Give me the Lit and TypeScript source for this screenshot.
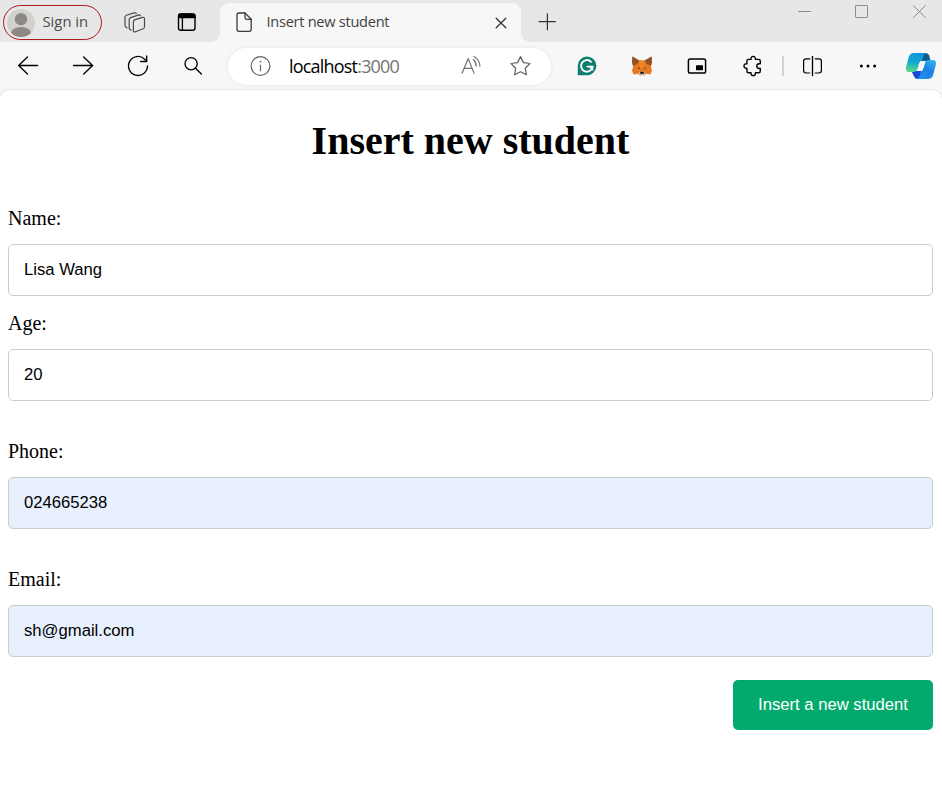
import { LitElement, html, css, svg } from "lit";
import { customElement, property } from "lit/decorators.js";

interface Glyph {
  box: string;
  w: number;
  h: number;
  art: unknown;
}

const glyphs: Record<string, Glyph> = {
  avatar: {
    box: "0 0 28 28", w: 28, h: 28,
    art: svg`<clipPath id="c"><circle cx="14" cy="14" r="14"/></clipPath>
      <g clip-path="url(#c)" stroke="none"><rect width="28" height="28" fill="#d3d1ce"/>
      <circle cx="14" cy="10.2" r="6.2" fill="#8b8885"/><ellipse cx="14" cy="25" rx="10.4" ry="7" fill="#8b8885"/></g>`,
  },
  stack: {
    box: "123 11 24 24", w: 24, h: 24,
    art: svg`<g stroke="#4a4a4a" stroke-width="1.2">
      <path d="M135.2 19.6L142.6 17.4Q144.5 17 144.5 19V26.8Q144.5 28.3 143.2 28.8L135.5 31.8Q133.4 32.5 133.4 30.3V22Q133.4 20.2 135.2 19.6Z"/>
      <path d="M131.2 30.2Q129.2 29.8 129.2 28V19.6Q129.2 18.2 130.6 17.6L138.2 15.1Q139.8 14.6 140.5 15.8"/>
      <path d="M127 27.8Q125 27.4 125 25.6V17.2Q125 15.8 126.4 15.2L134 12.9Q135.6 12.5 136.3 13.5"/></g>`,
  },
  tabs: {
    box: "175 11 24 24", w: 24, h: 24,
    art: svg`<rect x="178.5" y="14" width="16.5" height="16.3" rx="2.2" stroke-width="1.4"/>
      <path d="M178 18.3V15.6Q178 13.4 180.2 13.4H193.3Q195.6 13.4 195.6 15.6V18.3Z" fill="#000" stroke="none"/><path d="M182.4 18V30"/>`,
  },
  doc: {
    box: "234 10 20 24", w: 20, h: 24,
    art: svg`<g stroke="#3b3b3b" stroke-width="1.3"><path d="M239 13H245L251.2 19.3V29.2Q251.2 31.3 249.2 31.3H239Q237 31.3 237 29.2V15Q237 13 239 13Z"/>
      <path d="M245 13V17.5Q245 19.3 246.8 19.3H251.2"/></g>`,
  },
  close: { box: "0 0 12 12", w: 12, h: 12, art: svg`<path d="M1.2 1.2L10.8 10.8M10.8 1.2L1.2 10.8" stroke="#3b3b3b" stroke-width="1.4"/>` },
  plus: { box: "0 0 18 18", w: 18, h: 18, art: svg`<path d="M1 8.6H17.4M9.4 .8V16.8" stroke="#333" stroke-width="1.2"/>` },
  min: { box: "0 0 14 14", w: 14, h: 14, art: svg`<path d="M.5 6.5H12.5" stroke="#8d8d8d" stroke-width="1"/>` },
  max: { box: "0 0 14 14", w: 14, h: 14, art: svg`<rect x=".5" y=".5" width="12" height="12" rx=".6" stroke="#8d8d8d" stroke-width="1"/>` },
  quit: { box: "0 0 14 14", w: 14, h: 14, art: svg`<path d="M.4 .6L12.4 12.6M12.4 .6L.4 12.6" stroke="#8d8d8d" stroke-width="1"/>` },
  back: { box: "16 54 24 24", w: 24, h: 24, art: svg`<path d="M37.6 65.5H18.6M27.5 57L18.6 65.5L27.5 74"/>` },
  forward: { box: "71 54 24 24", w: 24, h: 24, art: svg`<path d="M73.6 65.5H92.6M83.7 57L92.6 65.5L83.7 74"/>` },
  reload: { box: "126 54 24 24", w: 24, h: 24, art: svg`<path d="M147.5 66A9.5 9.5 0 1 1 144.4 58.9L146.7 61.3M146.7 56V61.5H140.6"/>` },
  search: { box: "181 54 24 24", w: 24, h: 24, art: svg`<circle cx="191.1" cy="63.7" r="6.1"/><path d="M195.5 68.2L201.4 74"/>` },
  info: {
    box: "248 54 24 24", w: 24, h: 24,
    art: svg`<g stroke="#666" stroke-width="1.2"><circle cx="260.5" cy="66" r="9.4"/><path d="M260.5 65V70.8"/></g><circle cx="260.5" cy="61.7" r=".9" fill="#666" stroke="none"/>`,
  },
  read: {
    box: "460 54 24 24", w: 24, h: 24,
    art: svg`<g stroke="#707070" stroke-width="1.2"><path d="M462.2 73.1L468.2 58.6L474 73.1M464.3 68.3H472"/>
      <path d="M473.2 59.6Q476.2 61.8 476.2 66M474 56.4Q479.9 60 479.9 66.2"/></g>`,
  },
  star: {
    box: "508 54 25 24", w: 25, h: 24,
    art: svg`<path d="M520.5 56.6L523.5 62.6L530 63.5L525.3 68.2L526.4 74.8L520.5 71.7L514.6 74.8L515.7 68.2L511 63.5L517.5 62.6Z" stroke="#666" stroke-width="1.25"/>`,
  },
  grammar: {
    box: "576 55 22 22", w: 22, h: 22,
    art: svg`<path d="M587 56.4A9.3 9.3 0 1 1 587 75.2H577.8V65.8A9.3 9.3 0 0 1 587 56.4Z" fill="#0c7f6e" stroke="none"/>
      <path d="M591 61.8A5.8 5.8 0 1 0 592.6 66.6H587.4" stroke="#fff" stroke-width="1.9"/><path d="M590.4 68.2L592.7 66.6V70" stroke="#fff" stroke-width="1.2"/>`,
  },
  fox: {
    box: "631 55 22 22", w: 22, h: 22,
    art: svg`<g stroke="none"><path d="M632.4 56.6L639.3 60.4H644.7L651.6 56.6L652 62L650.9 66.8L652 70.8L650.4 74.6L646.4 73.8L644.3 75.2H639.7L637.6 73.8L633.6 74.6L632 70.8L633.1 66.8L632 62Z" fill="#e8781e"/>
      <path d="M632.4 56.6L639.3 60.6L637.2 64.2L633 65.6L632 62ZM651.6 56.6L644.7 60.6L646.8 64.2L651 65.6L652 62Z" fill="#91502a"/>
      <path d="M639.3 60.4H644.7L644 68H640Z" fill="#ee8524"/>
      <path d="M638 67.2L640 68.1L639.8 68.9L638.2 68.5ZM646 67.2L644 68.1L644.2 68.9L645.8 68.5Z" fill="#5a3b22"/>
      <path d="M639.8 71.6H644.2L645.4 73.4L644.2 75.2H639.8L638.6 73.4Z" fill="#cdb9a8"/><path d="M640.3 71.8H643.7L644 73.8H640Z" fill="#16181d"/></g>`,
  },
  pip: { box: "685 54 24 24", w: 24, h: 24, art: svg`<rect x="688.4" y="59" width="17.2" height="14" rx="1.8" stroke-width="1.5"/><rect x="696" y="65.3" width="7" height="4.9" rx=".6" fill="#000" stroke="none"/>` },
  puzzle: {
    box: "740 54 24 24", w: 24, h: 24,
    art: svg`<path d="M748.6 59.4H751C750.4 55.4 756 55.4 755.4 59.4H758.6Q760.3 59.4 760.3 61.1V63.7H759.2C756 63.7 756 68.5 759.2 68.5H760.3V71Q760.3 72.8 758.6 72.8H755.4C756 76.6 750.4 76.6 751 72.8H748.6Q746.9 72.8 746.9 71V68.3C743 68.9 743 63.2 746.9 63.8V61.1Q746.9 59.4 748.6 59.4Z" stroke-width="1.4"/>`,
  },
  split: {
    box: "800 54 24 24", w: 24, h: 24,
    art: svg`<path d="M809.8 58.8H806Q803.6 58.8 803.6 61.2V70.6Q803.6 73 806 73H809.8M815.2 58.8H819Q821.4 58.8 821.4 61.2V70.6Q821.4 73 819 73H815.2" stroke-width="1.2"/><path d="M812.5 56.5V75.5"/>`,
  },
  dots: { box: "856 54 24 24", w: 24, h: 24, art: svg`<g fill="#000" stroke="none"><circle cx="861.4" cy="66" r="1.5"/><circle cx="868" cy="66" r="1.5"/><circle cx="874.6" cy="66" r="1.5"/></g>` },
  copilot: {
    box: "905 52 32 28", w: 32, h: 28,
    art: svg`<defs><linearGradient id="a" x1=".6" y1="0" x2=".35" y2="1"><stop offset="0" stop-color="#0a94dc"/><stop offset=".5" stop-color="#12aacb"/><stop offset="1" stop-color="#5bd98e"/></linearGradient>
      <linearGradient id="b" x1=".8" y1="0" x2=".3" y2="1"><stop offset="0" stop-color="#35b4ee"/><stop offset=".5" stop-color="#1d7fe6"/><stop offset="1" stop-color="#1e90f2"/></linearGradient></defs>
      <g stroke="none"><path d="M920 53H925.6Q928.4 53 929.2 55.5L930.6 61H921Z" fill="#0b5c8c"/>
      <path d="M911.5 71H921L923 79H918Q914.9 79 914 76.5Z" fill="#1c46d6"/>
      <path d="M914 53H926Q924 53.6 923.2 57L922.2 60.2Q919.6 60.8 918.8 64L917.6 68.6Q916.6 72 913 72H909Q905 72 906.1 67L908.8 56.8Q910 53 914 53Z" fill="url(#a)"/>
      <path d="M928.4 60H932.8Q937 60 935.8 65L933 75.2Q931.8 79 927.8 79H916.8Q919 78.4 920 75L921 71.4Q923 70.4 923.8 67.5L924.9 63.2Q925.8 60 928.4 60Z" fill="url(#b)"/></g>`,
  },
};

@customElement("ui-glyph")
class UiGlyph extends LitElement {
  @property() name = "";
  static styles = css`
    :host { display: block; flex: none; }
    svg { display: block; fill: none; stroke: #000; stroke-width: 1.35; stroke-linecap: round; stroke-linejoin: round; }
  `;
  render() {
    const g = glyphs[this.name];
    return html`<svg width=${g.w} height=${g.h} viewBox=${g.box}>${g.art}</svg>`;
  }
}

@customElement("browser-chrome")
class BrowserChrome extends LitElement {
  static styles = css`
    :host { display: block; font-family: "Open Sans", "Noto Sans", sans-serif; background: #f7f7f7; }
    .strip { display: flex; height: 42px; box-sizing: border-box; background: #e7e7e7; }
    .account { display: flex; align-items: center; box-sizing: border-box; width: 99px; height: 35px; margin: 5px 0 0 3px; padding-left: 3px; border: 1.4px solid #b0191e; border-radius: 18px; font-size: 14.8px; color: #4c4c4c; white-space: nowrap; }
    .account span { margin: -4px 0 0 7.5px; letter-spacing: 0; }
    .stack { margin: 11px 0 0 21px; }
    .tabs { margin: 11px 0 0 28px; }
    .tab { display: flex; position: relative; width: 301px; height: 39px; margin: 3px 0 0 21px; border-radius: 9px 9px 0 0; background: #f7f7f7; font-size: 14.6px; color: #424242; }
    .tab::before, .tab::after { content: ""; position: absolute; bottom: 0; width: 9px; height: 9px; }
    .tab::before { left: -9px; background: radial-gradient(circle at 0 0, transparent 8.5px, #f7f7f7 9px); }
    .tab::after { right: -9px; background: radial-gradient(circle at 100% 0, transparent 8.5px, #f7f7f7 9px); }
    .doc { margin: 7px 0 0 14px; }
    .title { width: 228px; margin-left: 12.5px; line-height: 36px; letter-spacing: -0.28px; white-space: nowrap; }
    .close { margin-top: 14px; }
    .plus { margin: 13px 0 0 17px; }
    .min { margin: 5px 0 0 242px; }
    .max { margin: 5px 0 0 43px; }
    .quit { margin: 5px 0 0 44px; }
    .bar { display: grid; grid-template-columns: 56px 54px 56px 54px 339px 56px 54px 56px 54px 8px 50px 62px 44px; height: 48px; align-items: center; justify-items: center; }
    .address { display: flex; align-items: center; justify-self: start; width: 323px; height: 37px; margin: 0 0 0 8px; border-radius: 19px; background: #fff; box-shadow: 0 0 4px rgba(0, 0, 0, 0.08); }
    .info { margin-left: 20px; }
    .url { width: 171px; margin-left: 17px; font-size: 18px; line-height: 36px; color: #000; letter-spacing: -0.8px; white-space: nowrap; }
    .port { color: #747474; }
    .star { margin-left: 24px; }
    .rule { width: 2px; height: 20px; background: #d2d2d2; }
  `;
  render() {
    return html`
      <div class="strip">
        <div class="account"><ui-glyph name="avatar"></ui-glyph><span>Sign in</span></div>
        <ui-glyph class="stack" name="stack"></ui-glyph>
        <ui-glyph class="tabs" name="tabs"></ui-glyph>
        <div class="tab">
          <ui-glyph class="doc" name="doc"></ui-glyph>
          <span class="title">Insert new student</span>
          <ui-glyph class="close" name="close"></ui-glyph>
        </div>
        <ui-glyph class="plus" name="plus"></ui-glyph>
        <ui-glyph class="min" name="min"></ui-glyph>
        <ui-glyph class="max" name="max"></ui-glyph>
        <ui-glyph class="quit" name="quit"></ui-glyph>
      </div>
      <div class="bar">
        ${["back", "forward", "reload", "search"].map((n) => html`<ui-glyph name=${n}></ui-glyph>`)}
        <div class="address">
          <ui-glyph class="info" name="info"></ui-glyph>
          <span class="url">localhost<span class="port">:3000</span></span>
          <ui-glyph name="read"></ui-glyph>
          <ui-glyph class="star" name="star"></ui-glyph>
        </div>
        ${["grammar", "fox", "pip", "puzzle"].map((n) => html`<ui-glyph name=${n}></ui-glyph>`)}
        <div class="rule"></div>
        ${["split", "dots", "copilot"].map((n) => html`<ui-glyph name=${n}></ui-glyph>`)}
      </div>
    `;
  }
}

@customElement("app-root")
class AppRoot extends LitElement {
  static styles = css`
    :host { display: block; height: 797px; overflow: hidden; background: #f7f7f7; }
    .page { box-sizing: border-box; height: 707px; padding: 0 9px 0 8px; border-radius: 9px 9px 0 0; background: #fff; box-shadow: 0 0 2px rgba(0, 0, 0, 0.2); font-family: "Liberation Serif", serif; color: #000; }
    h1 { margin: 0; padding-top: 28px; font-size: 40px; line-height: 46px; text-align: center; }
    form { display: flex; flex-direction: column; padding-top: 43px; }
    label { height: 37px; font-size: 20px; line-height: 23px; }
    input { box-sizing: border-box; width: 100%; height: 52px; margin: 0 0 16px; padding: 0 15px; border: 1px solid #ccc; border-radius: 5px; background: #fff; font: 16.67px "Liberation Sans", sans-serif; color: #000; }
    .spaced { margin-bottom: 39px; }
    .filled { background: #e8f0fe; }
    .last { margin-bottom: 23px; }
    button { align-self: flex-end; width: 200px; height: 50px; padding: 0 0 1px; border: 0; border-radius: 5px; background: #04aa6d; color: #fff; font: 16.67px "Liberation Sans", sans-serif; }
  `;
  render() {
    return html`
      <browser-chrome></browser-chrome>
      <div class="page">
        <h1>Insert new student</h1>
        <form>
          <label for="name">Name:</label>
          <input id="name" value="Lisa Wang" />
          <label for="age">Age:</label>
          <input id="age" class="spaced" value="20" />
          <label for="phone">Phone:</label>
          <input id="phone" class="spaced filled" value="024665238" />
          <label for="email">Email:</label>
          <input id="email" class="last filled" value="sh@gmail.com" />
          <button type="button">Insert a new student</button>
        </form>
      </div>
    `;
  }
}
